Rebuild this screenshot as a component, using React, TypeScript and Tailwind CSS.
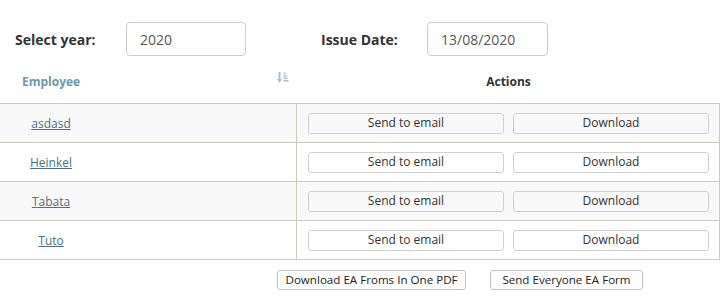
import React from "react";

const employees = ["asdasd", "Heinkel", "Tabata", "Tuto"];

function SortIcon() {
  return (
    <svg width="12" height="12" viewBox="0 0 12 12" fill="#a9c1d1">
      <rect x="1.5" y="0" width="2" height="8" />
      <polygon points="0,7 5,7 2.5,11" />
      <rect x="6.5" y="0.5" width="2" height="1.6" />
      <rect x="6.5" y="3" width="3" height="1.6" />
      <rect x="6.5" y="5.5" width="4" height="1.6" />
      <rect x="6.5" y="8" width="5" height="1.6" />
    </svg>
  );
}

export default function App() {
  return (
    <div
      className="w-[727px] h-[296px] bg-white text-[#333]"
      style={{ fontFamily: '"Open Sans", "Noto Sans", sans-serif' }}
    >
      <div className="flex items-center pt-[22px]">
        <div className="w-[126px] pl-[15px] text-[14px] font-bold">Select year:</div>
        <div className="w-[120px] h-[34px] flex items-center pl-[13px] border border-[#ccc] rounded-[4px] text-[14px] text-[#555]">
          2020
        </div>
        <div className="ml-[75px] w-[106px] text-[14px] font-bold">Issue Date:</div>
        <div className="w-[121px] h-[34px] flex items-center pl-[13px] border border-[#ccc] rounded-[4px] text-[14px] text-[#555]">
          13/08/2020
        </div>
      </div>

      <div className="flex h-[37px] mt-[10px] pt-[7px] text-[12px] font-bold">
        <div className="w-[297px] flex justify-between pl-[22px] pr-[8px]">
          <span className="text-[#6b9aa6]">Employee</span>
          <span className="-mt-[1px]">
            <SortIcon />
          </span>
        </div>
        <div className="w-[423px] text-center">Actions</div>
      </div>

      <div className="w-[720px] border-t border-r border-[#cbcbc0]">
        {employees.map((name, i) => (
          <div
            key={name}
            className={`flex h-[39px] border-b border-[#cbcbc0] ${i % 2 === 0 ? "bg-[#f9f9f9]" : "bg-white"}`}
          >
            <div className="w-[297px] border-r border-[#cbcbc0] flex items-center">
              <div className="w-[102px] text-center -mt-[3px]">
                <a href="#" className="text-[12px] text-[#4d6f80] underline">
                  {name}
                </a>
              </div>
            </div>
            <div className="flex items-center gap-[9px] pl-[11px]">
              <button className="w-[196px] h-[21px] border border-[#d0d0d0] rounded-[3px] text-[12px] text-[#333] leading-none">
                Send to email
              </button>
              <button className="w-[196px] h-[21px] border border-[#d0d0d0] rounded-[3px] text-[12px] text-[#333] leading-none">
                Download
              </button>
            </div>
          </div>
        ))}
      </div>

      <div className="flex gap-[24px] ml-[277px] mt-[10px]">
        <button className="w-[189px] h-[20px] bg-white border border-[#c4c4c4] rounded-[3px] text-[11.6px] text-[#222] leading-none">
          Download EA Froms In One PDF
        </button>
        <button className="w-[153px] h-[20px] bg-white border border-[#c4c4c4] rounded-[3px] text-[11.6px] text-[#222] leading-none">
          Send Everyone EA Form
        </button>
      </div>
    </div>
  );
}
